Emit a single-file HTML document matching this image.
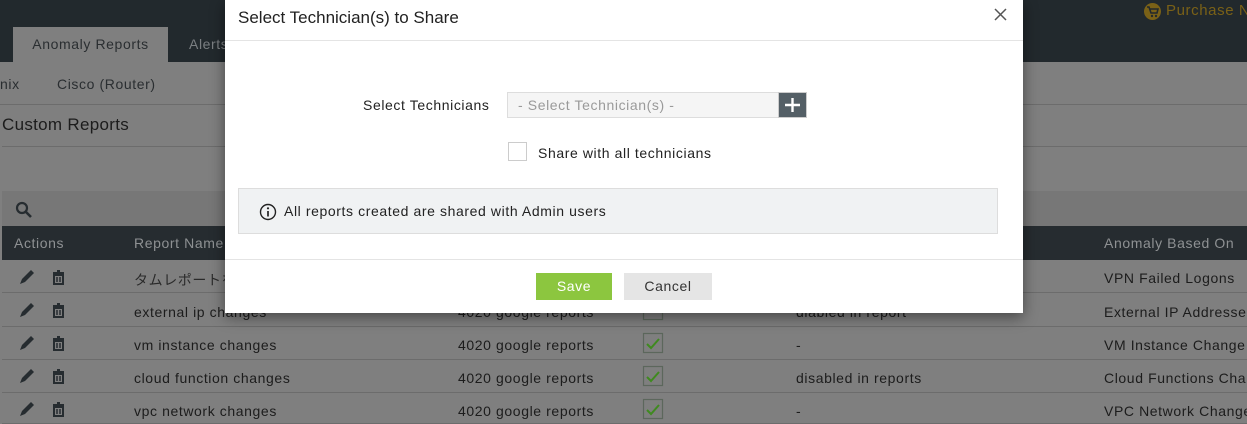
<!DOCTYPE html>
<html style="overflow:hidden"><head><meta charset="utf-8"><style>
*{margin:0;padding:0;box-sizing:border-box}
body{width:1247px;height:424px;overflow:hidden;background:#7f7f7f;font-family:"Liberation Sans","Noto Sans CJK JP",sans-serif;font-size:14px;letter-spacing:0.6px;color:#1c1c1c;position:relative}
.abs{position:absolute;white-space:nowrap}
.top{position:absolute;left:0;top:0;width:1247px;height:62px;background:#22292d}
.tab{position:absolute;left:13px;top:27px;width:155px;height:35px;background:#7f7f7f;color:#2a2e31;font-size:14px;text-align:center;line-height:34px}
.line{position:absolute;height:1px;background:#6c6c6c}
.th{position:absolute;left:2px;top:226px;width:1245px;height:34px;background:#262c30;overflow:hidden}
.th span{position:absolute;top:9px;color:#8e9193;font-size:14px;white-space:nowrap}
.row{position:absolute;left:2px;width:1245px;height:33px;border-bottom:1px solid #6c6c6c;overflow:hidden}
.row span{position:absolute;top:10px;white-space:nowrap}
.modal{position:absolute;left:225px;top:0;width:798px;height:313px;background:#fff;box-shadow:0 4px 14px rgba(0,0,0,.45)}
</style></head><body>
<div class="top"></div>
<div class="tab">Anomaly Reports</div>
<div class="abs" style="left:189px;top:36px;color:#7b7f82">Alerts</div>
<div class="abs" style="left:1144px;top:3px;width:17px;height:17px;border-radius:50%;background:#7a6117"></div>
<svg class="abs" style="left:1146px;top:6px" width="13" height="12" viewBox="0 0 13 12"><path d="M1 1h2l2 6h6l1-4H4" stroke="#22292d" stroke-width="1.6" fill="none"/><circle cx="6" cy="10" r="1.2" fill="#22292d"/><circle cx="10" cy="10" r="1.2" fill="#22292d"/></svg>
<div class="abs" style="left:1166px;top:2px;color:#7a6117;font-size:15px">Purchase No</div>
<div class="abs" style="left:0;top:76px;color:#2a2e31">nix</div>
<div class="abs" style="left:57px;top:76px;color:#2a2e31">Cisco (Router)</div>
<div class="line" style="left:0;top:104px;width:1247px"></div>
<div class="abs" style="left:2px;top:115px;font-size:17px;color:#1c1c1c;letter-spacing:0.3px">Custom Reports</div>
<div class="line" style="left:2px;top:146px;width:1245px"></div>
<div class="abs" style="left:2px;top:191px;width:1245px;height:35px;background:#777"></div>
<svg class="abs" style="left:15px;top:201px" width="18" height="18" viewBox="0 0 18 18"><circle cx="7" cy="7" r="5" stroke="#262c30" stroke-width="2.2" fill="none"/><path d="M11 11l5 5" stroke="#262c30" stroke-width="2.6"/></svg>
<div class="th"><span style="left:12px">Actions</span><span style="left:132px">Report Name</span><span style="left:1102px">Anomaly Based On</span></div>

<div class="row" style="top:260px"><span style="left:132px;color:#2a2a2a">タムレポートを</span><span style="left:1102px">VPN Failed Logons</span></div>
<div class="row" style="top:294px"><span style="left:132px">external ip changes</span><span style="left:456px">4020 google reports</span><span style="left:794px">diabled in report</span><span style="left:1102px">External IP Addresse</span></div>
<div class="row" style="top:327px"><span style="left:132px">vm instance changes</span><span style="left:456px">4020 google reports</span><span style="left:794px">-</span><span style="left:1102px">VM Instance Change</span></div>
<div class="row" style="top:360px"><span style="left:132px">cloud function changes</span><span style="left:456px">4020 google reports</span><span style="left:794px">disabled in reports</span><span style="left:1102px">Cloud Functions Char</span></div>
<div class="row" style="top:393px;height:31px"><span style="left:132px">vpc network changes</span><span style="left:456px">4020 google reports</span><span style="left:794px">-</span><span style="left:1102px">VPC Network Change</span></div>

<svg class="abs" style="left:0;top:260px" width="700" height="164">
<g id="ic">
<path d="M20 24l2-5 9-9 3 3-9 9z" fill="#262c30"/>
<path d="M53 13h11M57 11h3M54 15h9v9h-9z" stroke="#262c30" stroke-width="2" fill="none"/>
<path d="M57 17v5M60 17v5" stroke="#262c30" stroke-width="1.5"/>
</g>
<use href="#ic" y="33"/><use href="#ic" y="66"/><use href="#ic" y="99"/><use href="#ic" y="132"/>
<g fill="none" stroke="#5c675c" stroke-width="1.2">
<rect x="643.5" y="40.5" width="19" height="19"/><rect x="643.5" y="73.5" width="19" height="19"/><rect x="643.5" y="106.5" width="19" height="19"/><rect x="643.5" y="139.5" width="19" height="19"/>
</g>
<g fill="none" stroke="#3f8a1f" stroke-width="2">
<path d="M647 84l4 4 8-9"/><path d="M647 117l4 4 8-9"/><path d="M647 150l4 4 8-9"/>
</g>
</svg>

<div class="modal">
 <div class="abs" style="left:13px;top:8px;font-size:17px;color:#222;letter-spacing:0">Select Technician(s) to Share</div>
 <svg class="abs" style="left:769px;top:8px" width="13" height="13"><path d="M1 1l11 11M12 1L1 12" stroke="#555" stroke-width="1.5"/></svg>
 <div class="abs" style="left:0;top:40px;width:798px;height:1px;background:#e4e4e4"></div>
 <div class="abs" style="left:138px;top:97px;color:#222">Select Technicians</div>
 <div class="abs" style="left:282px;top:92px;width:272px;height:26px;background:#f5f5f5;border:1px solid #ddd;color:#9a9a9a;padding:3px 10px;line-height:18px">- Select Technician(s) -</div>
 <div class="abs" style="left:553px;top:92px;width:29px;height:26px;background:#545f66;border:1px solid #ccc"></div>
 <svg class="abs" style="left:559px;top:97px" width="17" height="16"><path d="M8.5 1v14M1 8h15" stroke="#fff" stroke-width="2.4"/></svg>
 <div class="abs" style="left:283px;top:142px;width:19px;height:19px;border:1px solid #ccc;background:#fff"></div>
 <div class="abs" style="left:313px;top:145px;color:#222">Share with all technicians</div>
 <div class="abs" style="left:13px;top:188px;width:760px;height:46px;background:#f0f2f3;border:1px solid #ddd"></div>
 <svg class="abs" style="left:34px;top:203px" width="18" height="18"><circle cx="9" cy="9" r="7.5" stroke="#222" stroke-width="1.4" fill="none"/><path d="M9 8v5.5" stroke="#222" stroke-width="1.7"/><circle cx="9" cy="5.3" r="1.1" fill="#222"/></svg>
 <div class="abs" style="left:59px;top:203px;color:#222">All reports created are shared with Admin users</div>
 <div class="abs" style="left:0;top:259px;width:798px;height:1px;background:#e4e4e4"></div>
 <div class="abs" style="left:311px;top:273px;width:76px;height:27px;background:#8cc63f;color:#fff;text-align:center;line-height:27px">Save</div>
 <div class="abs" style="left:399px;top:273px;width:88px;height:27px;background:#e5e5e5;color:#333;text-align:center;line-height:27px">Cancel</div>
</div>
</body></html>
